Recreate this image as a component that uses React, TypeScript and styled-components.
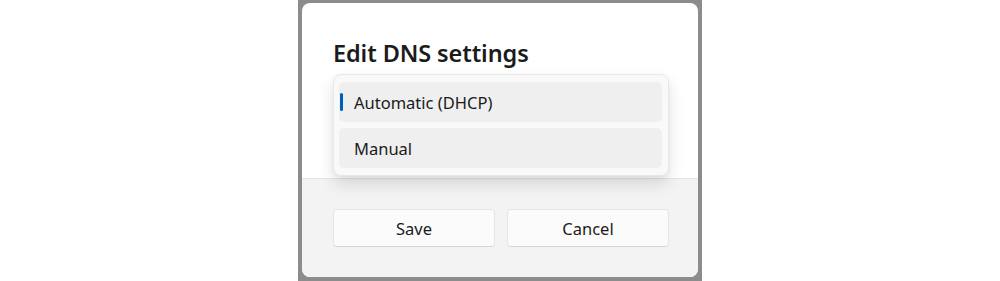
import React from 'react';
import styled, { createGlobalStyle } from 'styled-components';

const GlobalStyle = createGlobalStyle`
  html, body {
    margin: 0;
    padding: 0;
    background: #ffffff;
  }
  body {
    font-family: "Noto Sans", "Open Sans", sans-serif;
    color: #1b1b1b;
  }
`;

const Page = styled.div`
  display: flex;
  justify-content: center;
  height: 281px;
`;

const Frame = styled.div`
  width: 396px;
  padding: 3px 4px 4px;
  background: #8c8c8c;
  display: flex;
`;

const Dialog = styled.div`
  flex: 1;
  display: flex;
  flex-direction: column;
  background: #ffffff;
  border-radius: 8px;
  overflow: hidden;
`;

const Body = styled.div`
  height: 175px;
  box-sizing: border-box;
  padding: 34px 29px 0 31px;
`;

const Title = styled.h1`
  margin: 0;
  font-size: 23.5px;
  line-height: 32px;
  font-weight: 600;
  letter-spacing: -0.1px;
`;

const ComboArea = styled.div`
  position: relative;
  margin-top: 5px;
  height: 40px;
`;

const Menu = styled.ul`
  position: absolute;
  z-index: 2;
  top: 0;
  left: 0;
  width: 336px;
  box-sizing: border-box;
  margin: 0;
  padding: 7px 6px 7px 5px;
  list-style: none;
  display: flex;
  flex-direction: column;
  gap: 6px;
  background: #f9f9f9;
  border: 1px solid #e8e8e8;
  border-radius: 8px;
  box-shadow: 0 8px 16px rgba(0, 0, 0, 0.12), 0 2px 4px rgba(0, 0, 0, 0.04);
`;

const Item = styled.li<{ $selected?: boolean }>`
  position: relative;
  height: 40px;
  display: flex;
  align-items: center;
  padding-left: 15px;
  border-radius: 5px;
  background: #efefef;
  font-size: 16.5px;
  color: #1b1b1b;

  &::before {
    content: '';
    display: ${p => (p.$selected ? 'block' : 'none')};
    position: absolute;
    left: 1px;
    top: 11px;
    width: 3px;
    height: 18px;
    border-radius: 2px;
    background: #005fb8;
  }
`;

const Footer = styled.div`
  flex: 1;
  background: #f3f3f3;
  border-top: 1px solid #e5e5e5;
  padding: 30px 29px 0 31px;
`;

const ButtonRow = styled.div`
  display: grid;
  grid-template-columns: 1fr 1fr;
  gap: 12px;
  width: 336px;
`;

const Button = styled.button`
  height: 38px;
  background: #fbfbfb;
  border: 1px solid #e5e5e5;
  border-bottom-color: #d6d6d6;
  border-radius: 4px;
  font-family: inherit;
  font-size: 16.5px;
  color: #1b1b1b;
  padding: 0;
`;

export default function App() {
  return (
    <>
      <GlobalStyle />
      <Page>
        <Frame>
          <Dialog>
            <Body>
              <Title>Edit DNS settings</Title>
              <ComboArea>
                <Menu>
                  <Item $selected>Automatic (DHCP)</Item>
                  <Item>Manual</Item>
                </Menu>
              </ComboArea>
            </Body>
            <Footer>
              <ButtonRow>
                <Button>Save</Button>
                <Button>Cancel</Button>
              </ButtonRow>
            </Footer>
          </Dialog>
        </Frame>
      </Page>
    </>
  );
}
